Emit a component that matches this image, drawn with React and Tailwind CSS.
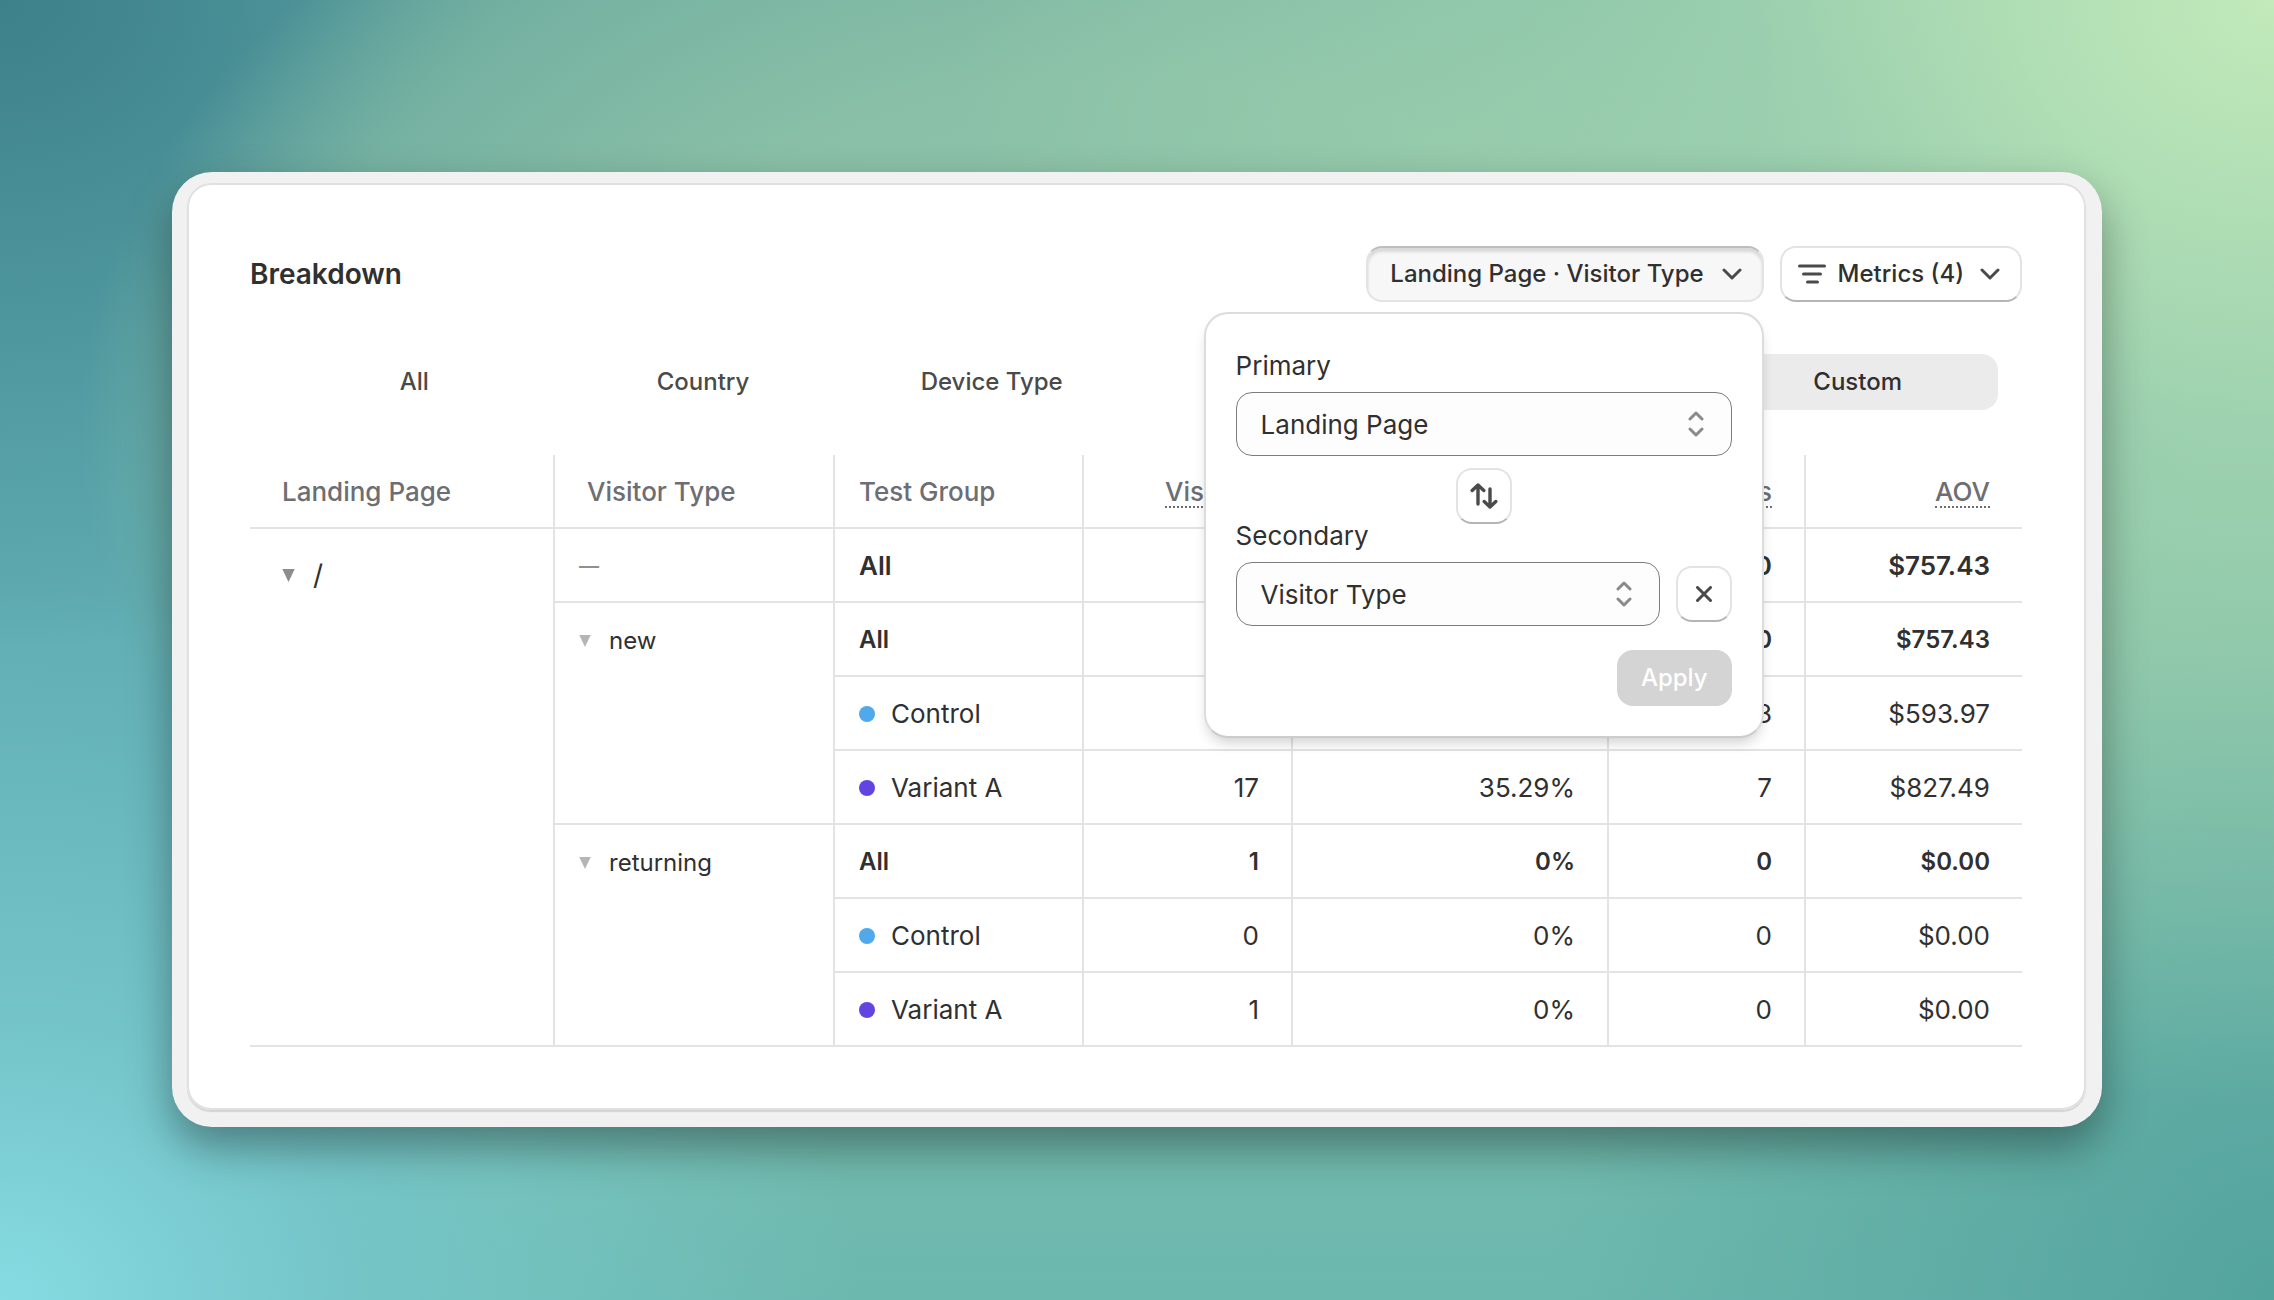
const tabs = [
  { id: 'all', label: 'All' },
  { id: 'country', label: 'Country' },
  { id: 'device', label: 'Device Type' },
  { id: 'visitor', label: '' },
  { id: 'source', label: '' },
  { id: 'custom', label: 'Custom' },
]

const rows = [
  { primary: '/', secondary: '—', group: 'All', values: ['35', '28.57%', '10', '$757.43'], total: true },
  { secondary: 'new', group: 'All', values: ['34', '29.41%', '10', '$757.43'], subtotal: true },
  { group: 'Control', values: ['17', '17.65%', '3', '$593.97'] },
  { group: 'Variant A', values: ['17', '35.29%', '7', '$827.49'] },
  { secondary: 'returning', group: 'All', values: ['1', '0%', '0', '$0.00'], subtotal: true },
  { group: 'Control', values: ['0', '0%', '0', '$0.00'] },
  { group: 'Variant A', values: ['1', '0%', '0', '$0.00'] },
]

function Triangle({ className }) {
  return (
    <svg viewBox="0 0 13 13" className={className} fill="currentColor" aria-hidden="true">
      <path d="M0.3 0h12.4L6.5 13z" />
    </svg>
  )
}

function FilterIcon() {
  return (
    <svg width="28" height="20" viewBox="0 0 28 20" fill="none" stroke="#4a4a4a" strokeWidth="3" strokeLinecap="round" aria-hidden="true">
      <path d="M1.5 2h25M5.5 10h17M9.5 18h10" />
    </svg>
  )
}

function ChevronIcon() {
  return (
    <svg width="20" height="12" viewBox="0 0 20 12" fill="none" stroke="#4a4a4a" strokeWidth="3" strokeLinecap="round" strokeLinejoin="round" aria-hidden="true">
      <path d="M2 2l8 8 8-8" />
    </svg>
  )
}

function SwapIcon() {
  return (
    <svg width="28" height="28" viewBox="0 0 28 28" fill="none" stroke="#4a4a4a" strokeWidth="3.4" strokeLinecap="round" strokeLinejoin="round" aria-hidden="true">
      <path d="M8 22V3M2.200 8.500L8 3l5.800 5.500M20 7v18M14.200 19.500L20 25l5.800-5.500" />
    </svg>
  )
}

function CloseIcon() {
  return (
    <svg width="16" height="16" viewBox="0 0 16 16" fill="none" stroke="#4a4a4a" strokeWidth="3" strokeLinecap="round" aria-hidden="true">
      <path d="M1.500 1.500l13 13M14.500 1.500l-13 13" />
    </svg>
  )
}

function IconButton({ label, children }) {
  return (
    <button
      type="button"
      aria-label={label}
      className="flex size-14 shrink-0 items-center justify-center rounded-2xl border-2 border-[#e3e3e3] border-b-[#b5b5b5] bg-white"
    >
      {children}
    </button>
  )
}

function SelectField({ id, value }) {
  return (
    <div className="relative grow">
      <select
        id={id}
        defaultValue={value}
        className="h-16 w-full appearance-none rounded-2xl border border-[#7c7c7c] bg-[#fdfdfd] px-6 text-[26px] text-[#303030]"
      >
        <option>Landing Page</option>
        <option>Visitor Type</option>
      </select>
      <svg
        className="pointer-events-none absolute top-1/2 right-7 -translate-y-1/2"
        width="16"
        height="26"
        viewBox="0 0 16 26"
        fill="none"
        stroke="#8a8a8a"
        strokeWidth="3"
        strokeLinecap="round"
        strokeLinejoin="round"
        aria-hidden="true"
      >
        <path d="M2 8l6-6 6 6M2 18l6 6 6-6" />
      </svg>
    </div>
  )
}

function DimensionPopover() {
  return (
    <div className="absolute top-[66px] right-0 z-10 w-[560px] rounded-3xl border-2 border-[#dcdcdc] border-b-[#cccccc] bg-white px-[30px] pt-10 pb-[30px] shadow-[0_8px_14px_-4px_rgba(0,0,0,0.2)]">
      <label htmlFor="primary" className="mb-3.5 block text-[26px] leading-6">
        Primary
      </label>
      <div className="flex">
        <SelectField id="primary" value="Landing Page" />
      </div>
      <div className="mt-3 flex justify-center">
        <IconButton label="Swap dimensions">
          <SwapIcon />
        </IconButton>
      </div>
      <label htmlFor="secondary" className="mb-3.5 block text-[26px] leading-6">
        Secondary
      </label>
      <div className="flex items-center gap-4">
        <SelectField id="secondary" value="Visitor Type" />
        <IconButton label="Remove secondary">
          <CloseIcon />
        </IconButton>
      </div>
      <div className="mt-6 flex justify-end">
        <button type="button" disabled className="h-14 rounded-2xl bg-[#d4d4d4] px-6 text-2xl font-medium text-white">
          Apply
        </button>
      </div>
    </div>
  )
}

function Header() {
  return (
    <div className="flex items-center justify-between">
      <h1 className="text-[28px] leading-9 font-semibold">Breakdown</h1>
      <div className="flex gap-4">
        <div className="relative">
          <button
            type="button"
            aria-expanded="true"
            className="flex h-14 items-center gap-[18px] rounded-2xl border-2 border-[#e3e3e3] border-t-[#bdbdbd] bg-[#f7f7f7] pr-5 pl-[22px] text-2xl font-medium shadow-[inset_0_4px_3px_rgba(0,0,0,0.12)]"
          >
            Landing Page · Visitor Type
            <ChevronIcon />
          </button>
          <DimensionPopover />
        </div>
        <button
          type="button"
          className="flex h-14 items-center gap-4 rounded-2xl border-2 border-[#e3e3e3] border-b-[#b5b5b5] bg-white pr-5 pl-4 text-2xl font-medium"
        >
          <span className="flex items-center gap-3">
            <FilterIcon />
            Metrics (4)
          </span>
          <ChevronIcon />
        </button>
      </div>
    </div>
  )
}

function Tabs() {
  return (
    <div role="tablist" className="mt-[52px] grid grid-cols-6 gap-2 px-6">
      {tabs.map(({ id, label }) => (
        <button
          key={id}
          type="button"
          role="tab"
          aria-selected={id === 'custom'}
          className="h-14 rounded-2xl text-2xl font-medium text-[#4a4a4a] aria-selected:bg-[#ebebeb] aria-selected:text-[#303030]"
        >
          {label}
        </button>
      ))}
    </div>
  )
}

function GroupCell({ row }) {
  if (row.group === 'All') {
    return <td className={row.total ? 'pt-0.5 pl-6 text-[26px] font-semibold' : 'pt-0.5 pl-6 text-2xl font-semibold'}>All</td>
  }
  return (
    <td className="pt-0.5 pl-6">
      <span className="flex items-center gap-4">
        <span className={row.group === 'Control' ? 'size-4 rounded-full bg-[#4fa9ea]' : 'size-4 rounded-full bg-[#6245e0]'} />
        {row.group}
      </span>
    </td>
  )
}

function valueClass(row) {
  if (row.total) return 'pt-0.5 pr-8 text-right font-semibold'
  if (row.subtotal) return 'pt-0.5 pr-8 text-right text-2xl font-semibold'
  return 'pt-0.5 pr-8 text-right'
}

function BreakdownTable() {
  return (
    <table className="mt-[45px] w-full table-fixed border-separate border-spacing-0 text-[26px] leading-8 [&_td]:h-[74px] [&_td]:border-b-2 [&_td]:border-[#e3e3e3] [&_td:not(:first-child)]:border-l-2 [&_th]:h-[74px] [&_th]:border-b-2 [&_th]:border-[#e3e3e3] [&_th]:pt-0.5 [&_th+th]:border-l-2">
      <colgroup>
        <col className="w-[303px]" />
        <col className="w-[280px]" />
        <col className="w-[249px]" />
        <col className="w-[209px]" />
        <col className="w-[316px]" />
        <col className="w-[197px]" />
        <col className="w-[218px]" />
      </colgroup>
      <thead className="text-[#6d6e73]">
        <tr>
          <th className="pl-8 text-left font-medium">Landing Page</th>
          <th className="pl-8 text-left font-medium">Visitor Type</th>
          <th className="pl-6 text-left font-medium">Test Group</th>
          {['Visitors', 'Conversion Rate', 'Orders', 'AOV'].map((metric) => (
            <th key={metric} className="pr-8 text-right font-medium">
              <span className="inline-block border-b-2 border-dotted border-[#6d6e73] leading-7">{metric}</span>
            </th>
          ))}
        </tr>
      </thead>
      <tbody>
        {rows.map((row, i) => (
          <tr key={i} className="[&>td:first-child]:border-l-2 [&:first-child>td:first-child]:border-l-0">
            {row.primary && (
              <td rowSpan={7} className="pt-[30px] pl-8 align-top">
                <span className="flex items-center gap-[18px]">
                  <Triangle className="size-[13px] text-[#8c8c91]" />
                  <span className="text-[28px]">{row.primary}</span>
                </span>
              </td>
            )}
            {row.total && <td className="pt-0.5 pl-6 text-xl font-semibold text-[#8c9196]">{row.secondary}</td>}
            {row.subtotal && (
              <td rowSpan={3} className="pt-[22px] pl-6 align-top text-2xl">
                <span className="flex items-center gap-[18px]">
                  <Triangle className="size-3 text-[#b5b5b5]" />
                  {row.secondary}
                </span>
              </td>
            )}
            <GroupCell row={row} />
            {row.values.map((value, j) => (
              <td key={j} className={valueClass(row)}>
                {value}
              </td>
            ))}
          </tr>
        ))}
      </tbody>
    </table>
  )
}

export default function App() {
  return (
    <div className="min-h-screen bg-[radial-gradient(ellipse_58%_85%_at_100%_0%,#c2eaba_0%,#a6d8b2bb_40%,#9ed1b000_100%),radial-gradient(ellipse_32%_60%_at_100%_100%,#54a49e_0%,#54a49e00_100%),radial-gradient(ellipse_46%_54%_at_50%_33%,#8ec4a9_0%,#8ac0a7_50%,#76b2a2_82%,#6cafa200_101%),radial-gradient(ellipse_36%_50%_at_0%_0%,#3d818a_0%,#438890bb_40%,#5aa8ae00_100%),radial-gradient(ellipse_38%_55%_at_0%_100%,#86dbe2_0%,#7accd0bb_40%,#74c4c000_100%),linear-gradient(90deg,#60adb3_0%,#60adb3_8%,#60adb300_22%),linear-gradient(180deg,#80bca5_0%,#82bda5_50%,#6cb8af_100%)] p-[172px] font-['Inter',sans-serif] text-[#303030]">
      <div className="rounded-[40px] bg-[#f1f1f1] pt-[11px] pr-4 pb-[17px] pl-[15px] shadow-[0_20px_44px_rgba(0,0,0,0.36)]">
        <main className="rounded-3xl bg-white pt-[63px] pr-16 pb-[63px] pl-[63px] shadow-[inset_0_0_0_2px_#e0e0e0,0_2px_1px_rgba(0,0,0,0.12)]">
          <Header />
          <Tabs />
          <BreakdownTable />
        </main>
      </div>
    </div>
  )
}
